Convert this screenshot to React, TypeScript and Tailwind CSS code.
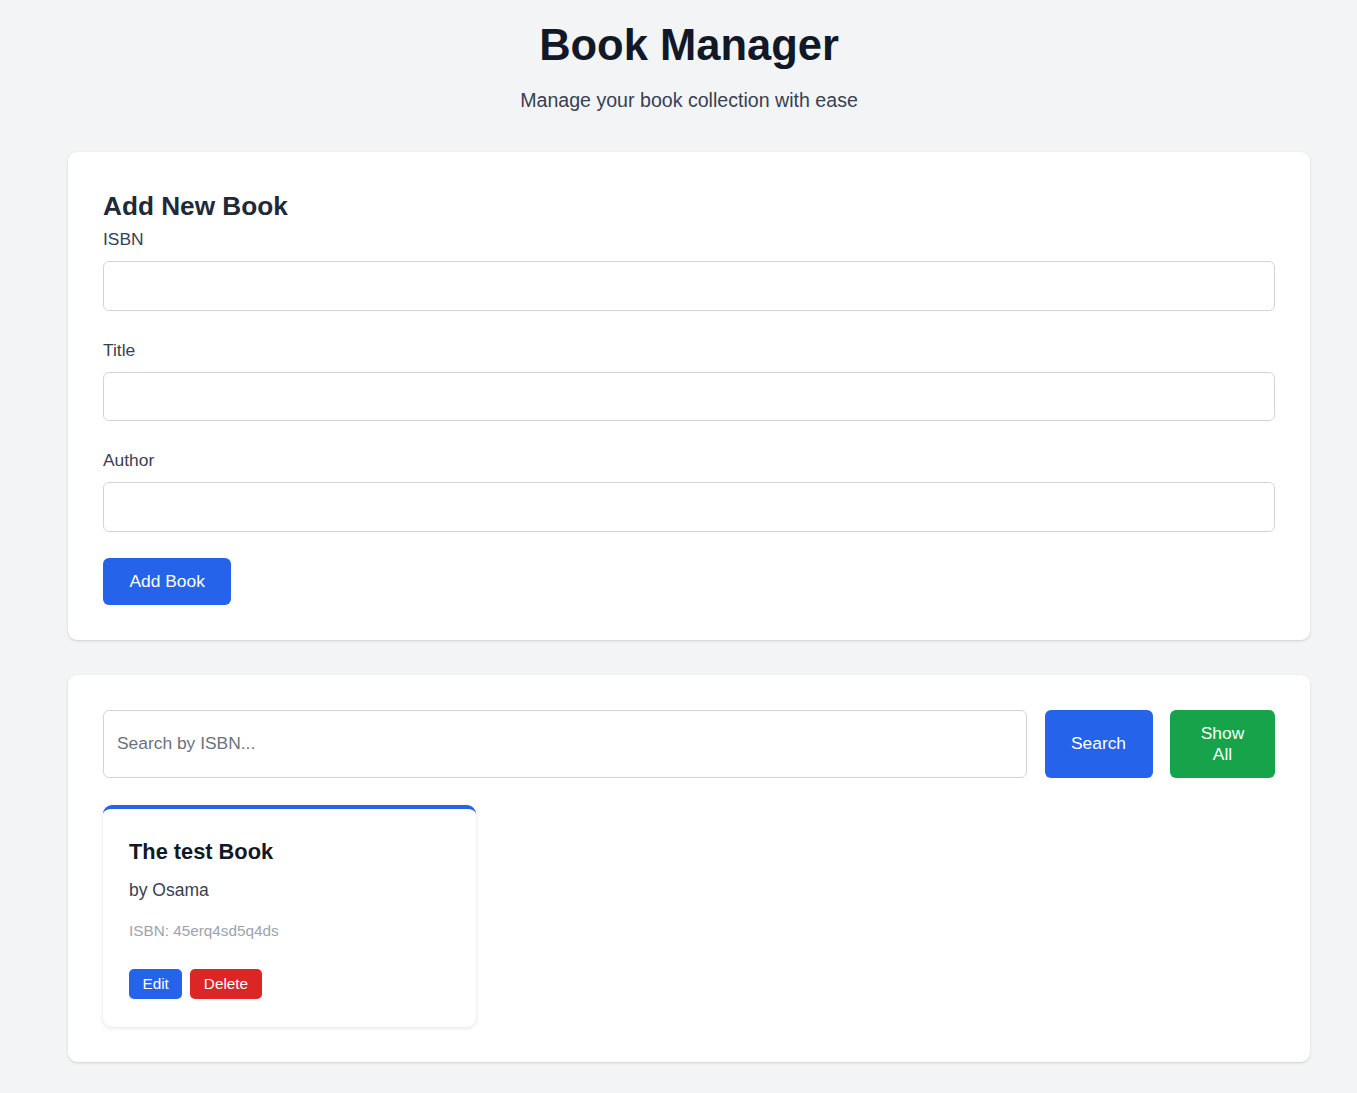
import React, { useState } from 'react';

interface Book {
  isbn: string;
  title: string;
  author: string;
}

const initialBooks: Book[] = [{ isbn: '45erq4sd5q4ds', title: 'The test Book', author: 'Osama' }];

const Field: React.FC<{ label: string; value: string; onChange: (v: string) => void }> = ({ label, value, onChange }) => (
  <div className="mb-[26px]">
    <label className="block text-[17.4px] leading-[26px] text-[#374151] mb-[9px]">{label}</label>
    <input
      value={value}
      onChange={e => onChange(e.target.value)}
      className="block w-full h-[49.5px] px-[13px] border border-[#d1d5db] rounded-[6px] bg-white text-[17.4px] outline-none"
    />
  </div>
);

export default function App() {
  const [books] = useState<Book[]>(initialBooks);
  const [isbn, setIsbn] = useState('');
  const [title, setTitle] = useState('');
  const [author, setAuthor] = useState('');
  const [query, setQuery] = useState('');

  return (
    <div className="min-h-screen bg-[#f3f4f6] pt-[19px] pb-[31px]" style={{ fontFamily: '"Liberation Sans", Arial, sans-serif' }}>
      <div className="ml-[68px] w-[1242px]">
        <h1 className="text-center text-[43.5px] leading-[52px] font-bold text-[#111827]">Book Manager</h1>
        <p className="text-center text-[19.6px] leading-[29px] text-[#374151] mt-[15px]">Manage your book collection with ease</p>

        {/* Add form */}
        <div className="mt-[37px] bg-white rounded-[9px] shadow-[0_1px_3px_rgba(0,0,0,0.1),0_1px_2px_rgba(0,0,0,0.06)] p-[35px]">
          <h2 className="text-[26.2px] leading-[39px] font-bold text-[#1f2937]">Add New Book</h2>
          <Field label="ISBN" value={isbn} onChange={setIsbn} />
          <Field label="Title" value={title} onChange={setTitle} />
          <Field label="Author" value={author} onChange={setAuthor} />
          <button className="h-[47px] px-[26.5px] rounded-[6px] bg-[#2563eb] text-white text-[17.4px] leading-[26px]">Add Book</button>
        </div>

        {/* Search + list */}
        <div className="mt-[35px] bg-white rounded-[9px] shadow-[0_1px_3px_rgba(0,0,0,0.1),0_1px_2px_rgba(0,0,0,0.06)] p-[35px]">
          <div className="flex gap-[17.5px] h-[68.5px]">
            <input
              value={query}
              onChange={e => setQuery(e.target.value)}
              placeholder="Search by ISBN..."
              className="flex-1 min-w-0 h-full px-[13px] border border-[#d1d5db] rounded-[6px] text-[17.4px] outline-none placeholder:text-[#6b7280]"
            />
            <button className="w-[108px] h-full rounded-[6px] bg-[#2563eb] text-white text-[17.4px] leading-[21px]">Search</button>
            <button className="w-[105px] h-full rounded-[6px] bg-[#16a34a] text-white text-[17.4px] leading-[21px] px-[26px]">Show All</button>
          </div>

          <div className="mt-[26.5px] grid grid-cols-3 gap-[26px]">
            {books.map(book => (
              <div key={book.isbn} className="bg-white rounded-[9px] border-t-4 border-[#2563eb] shadow-[0_1px_4px_rgba(0,0,0,0.12)] px-[26px] pt-[26px] pb-[28px]">
                <h3 className="text-[21.8px] leading-[33px] font-bold text-[#111827] mb-[9px]">{book.title}</h3>
                <p className="text-[17.5px] leading-[26px] text-[#374151]">by {book.author}</p>
                <p className="text-[15.3px] leading-[23px] text-[#9ca3af] mt-[16px]">ISBN: {book.isbn}</p>
                <div className="flex gap-[8px] mt-[27px]">
                  <button className="h-[30px] px-[13.5px] rounded-[5px] bg-[#2563eb] text-white text-[15.3px] leading-[23px]">Edit</button>
                  <button className="h-[30px] px-[13.5px] rounded-[5px] bg-[#dc2626] text-white text-[15.3px] leading-[23px]">Delete</button>
                </div>
              </div>
            ))}
          </div>
        </div>
      </div>
    </div>
  );
}
